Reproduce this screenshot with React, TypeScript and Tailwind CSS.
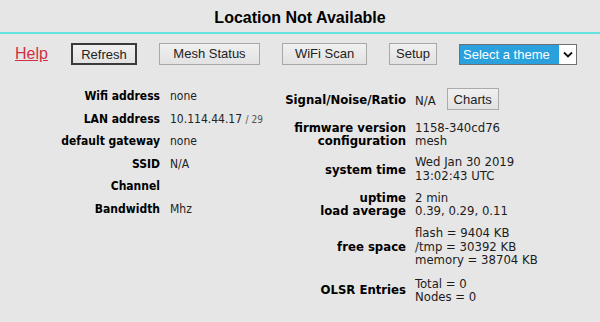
import type { ReactNode } from "react";

const leftRows: { label: string; value: ReactNode }[] = [
  { label: "Wifi address", value: "none" },
  {
    label: "LAN address",
    value: (
      <>
        10.114.44.17 <span className="text-[10px] text-[#555]">/ 29</span>
      </>
    ),
  },
  { label: "default gateway", value: "none" },
  { label: "SSID", value: "N/A" },
  { label: "Channel", value: "" },
  { label: "Bandwidth", value: "Mhz" },
];

function NavButton({ label, width, focused }: { label: string; width: string; focused?: boolean }) {
  return (
    <button
      className={`${width} h-[22px] bg-gradient-to-b from-[#f0f0f0] to-[#e2e2e2] text-[13px] text-[#222] font-['Liberation_Sans',sans-serif] ${
        focused ? "border-2 border-[#3a3a3a]" : "border border-[#a8a8a8]"
      }`}
    >
      {label}
    </button>
  );
}

function App() {
  return (
    <div className="min-h-screen bg-[#e6e6e6] font-['DejaVu_Sans',sans-serif] text-[#1c1c1c]">
      <h1 className="h-[32px] pt-[3px] flex items-center justify-center font-['Liberation_Sans',sans-serif] text-[16px] font-bold text-black">
        Location Not Available
      </h1>
      <div className="h-[2px] bg-[#66e2e0]" />

      <div className="flex items-center gap-[22px] pl-[15px] pt-[6px] h-[28px] box-content">
        <a href="#" className="w-[34px] text-[16px] text-[#d22f42] underline font-['Liberation_Sans',sans-serif]">
          Help
        </a>
        <NavButton label="Refresh" width="w-[66px]" focused />
        <NavButton label="Mesh Status" width="w-[101px]" />
        <NavButton label="WiFi Scan" width="w-[85px]" />
        <NavButton label="Setup" width="w-[48px]" />
        <div className="flex w-[118px] h-[21px] border border-[#707070] font-['Liberation_Sans',sans-serif]">
          <div className="flex-1 bg-[#2aa0dc] text-white text-[13px] leading-[19px] pl-[3px]">Select a theme</div>
          <div className="w-[17px] bg-white flex items-center justify-center">
            <svg width="10" height="7" viewBox="0 0 10 7">
              <path d="M1 1.5 L5 5.5 L9 1.5" fill="none" stroke="#111" strokeWidth="1.8" />
            </svg>
          </div>
        </div>
      </div>

      <div className="flex pt-[16px] font-stretch-condensed">
        <div className="w-[270px] grid grid-cols-[160px_auto] auto-rows-[22.5px] items-center text-[12px] pt-[1px]">
          {leftRows.map((r) => (
            <div key={r.label} className="contents">
              <div className="text-right font-bold text-black">{r.label}</div>
              <div className="pl-[10px] text-[#222]">{r.value}</div>
            </div>
          ))}
        </div>

        <div className="grid grid-cols-[136px_auto] items-center text-[13px] leading-[13px] pt-[4px]">
          <div className="text-right font-bold text-black">Signal/Noise/Ratio</div>
          <div className="pl-[9px] flex items-center gap-[11px]">
            <span className="pt-[2px]">N/A</span>
            <button className="w-[52px] h-[22px] border border-[#ababab] bg-gradient-to-b from-[#f0f0f0] to-[#e2e2e2] text-[13px] font-['Liberation_Sans',sans-serif] text-[#222]">
              Charts
            </button>
          </div>

          <div className="col-span-2 grid grid-cols-subgrid mt-[11px]">
            <div className="text-right font-bold text-black">
              firmware version
              <br />
              configuration
            </div>
            <div className="pl-[9px]">
              1158-340cd76
              <br />
              mesh
            </div>
          </div>

          <div className="col-span-2 grid grid-cols-subgrid items-center mt-[8px]">
            <div className="text-right font-bold text-black">system time</div>
            <div className="pl-[9px] leading-[14px]">
              Wed Jan 30 2019
              <br />
              13:02:43 UTC
            </div>
          </div>

          <div className="col-span-2 grid grid-cols-subgrid mt-[8px]">
            <div className="text-right font-bold text-black">
              uptime
              <br />
              load average
            </div>
            <div className="pl-[9px]">
              2 min
              <br />
              0.39, 0.29, 0.11
            </div>
          </div>

          <div className="col-span-2 grid grid-cols-subgrid items-center mt-[9px]">
            <div className="text-right font-bold text-black">free space</div>
            <div className="pl-[9px] leading-[13.5px]">
              flash = 9404 KB
              <br />
              /tmp = 30392 KB
              <br />
              memory = 38704 KB
            </div>
          </div>

          <div className="col-span-2 grid grid-cols-subgrid items-center mt-[10px]">
            <div className="text-right font-bold text-black">OLSR Entries</div>
            <div className="pl-[9px]">
              Total = 0
              <br />
              Nodes = 0
            </div>
          </div>
        </div>
      </div>
    </div>
  );
}

export default App;
